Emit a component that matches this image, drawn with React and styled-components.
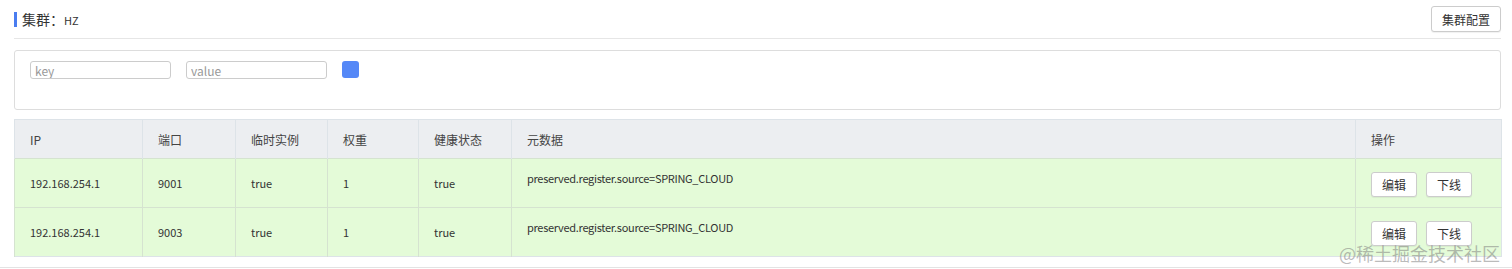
import styled, { createGlobalStyle } from "styled-components";

const GlobalStyle = createGlobalStyle`
  body {
    margin: 0;
    background: #fff;
    font-family: "Noto Sans CJK SC", sans-serif;
    color: #333;
  }
`;

const Page = styled.div`
  position: relative;
  width: 1512px;
  height: 269px;
  overflow: hidden;
`;

const Content = styled.div`
  padding: 0 11px 10px 14px;
  border-bottom: 1px solid #e3e3e3;
`;

const TitleBar = styled.div`
  display: flex;
  align-items: center;
  justify-content: space-between;
  height: 38px;
  border-bottom: 1px solid #e6e6e6;
`;

const Title = styled.div`
  display: flex;
  align-items: baseline;
  border-left: 3px solid #4a7df0;
  padding-left: 5px;
  height: 15px;
  line-height: 15px;
  font-size: 14px;
  color: #333;
`;

const Small = styled.span`
  font-size: 11px;
`;

const Button = styled.button`
  height: ${(p) => p.$h || 25}px;
  padding: 0 ${(p) => p.$px || 11}px;
  background: #fff;
  border: 1px solid #ccc;
  border-radius: 3px;
  font-size: 12px;
  font-family: "Noto Sans CJK SC", sans-serif;
  color: #333;
  box-shadow: 0 1px 1px rgba(0, 0, 0, 0.06);
`;

const FilterBox = styled.div`
  margin-top: 11px;
  border: 1px solid #ddd;
  border-radius: 3px;
  display: flex;
  align-items: flex-start;
  gap: 15px;
  padding: 10px 15px 0;
  box-sizing: border-box;
  height: 60px;
`;

const Input = styled.input`
  width: 141px;
  height: 18px;
  box-sizing: border-box;
  border: 1px solid #ccc;
  border-radius: 3px;
  padding: 0 4px;
  font-size: 12px;
  font-family: "Noto Sans CJK SC", sans-serif;
  &::placeholder {
    color: #999;
  }
`;

const Square = styled.div`
  width: 17px;
  height: 17px;
  border-radius: 3px;
  background: #5588f7;
`;

const Table = styled.table`
  margin-top: 9px;
  width: 1487px;
  border-collapse: collapse;
  table-layout: fixed;
  font-size: 11px;
  border: 1px solid #dde3e8;
`;

const Th = styled.th`
  height: 38px;
  background: #eceef1;
  border-left: 1px solid #dde3e8;
  text-align: left;
  font-weight: normal;
  font-size: 12px;
  padding: 0 0 0 15px;
  color: #444;
`;

const Tr = styled.tr`
  background: #e4fbd8;
  border-top: 1px solid #d5e3d0;
`;

const Td = styled.td`
  height: ${(p) => (p.$top ? 37 : 48)}px;
  border-left: 1px solid #d5e3d0;
  padding: ${(p) => (p.$top ? "11px 0 0 15px" : "0 0 0 15px")};
  vertical-align: ${(p) => (p.$top ? "top" : "middle")};
  letter-spacing: ${(p) => (p.$top ? "-0.3px" : "0")};
  color: #333;
  white-space: nowrap;
`;

const Ops = styled.div`
  display: flex;
  gap: 9px;
  padding-top: 2px;
`;

const Watermark = styled.div`
  position: absolute;
  right: 12px;
  bottom: 5px;
  font-size: 18px;
  line-height: 22px;
  color: rgba(120, 120, 120, 0.5);
`;

const cols = [
  ["IP", 128],
  ["端口", 93],
  ["临时实例", 92],
  ["权重", 91],
  ["健康状态", 93],
  ["元数据", 844],
  ["操作", 146],
];

const rows = [
  ["192.168.254.1", "9001"],
  ["192.168.254.1", "9003"],
];

export default function App() {
  return (
    <Page>
      <GlobalStyle />
      <Content>
        <TitleBar>
          <Title>
            集群：<Small>HZ</Small>
          </Title>
          <Button $h={26} $px={10}>集群配置</Button>
        </TitleBar>
        <FilterBox>
          <Input placeholder="key" />
          <Input placeholder="value" />
          <Square />
        </FilterBox>
        <Table>
          <colgroup>
            {cols.map(([name, w]) => (
              <col key={name} style={{ width: w }} />
            ))}
          </colgroup>
          <thead>
            <tr>
              {cols.map(([name]) => (
                <Th key={name}>{name}</Th>
              ))}
            </tr>
          </thead>
          <tbody>
            {rows.map(([ip, port]) => (
              <Tr key={port}>
                <Td>{ip}</Td>
                <Td>{port}</Td>
                <Td>true</Td>
                <Td>1</Td>
                <Td>true</Td>
                <Td $top>preserved.register.source=SPRING_CLOUD</Td>
                <Td>
                  <Ops>
                    <Button $px={10}>编辑</Button>
                    <Button $px={10}>下线</Button>
                  </Ops>
                </Td>
              </Tr>
            ))}
          </tbody>
        </Table>
      </Content>
      <Watermark>@稀土掘金技术社区</Watermark>
    </Page>
  );
}
